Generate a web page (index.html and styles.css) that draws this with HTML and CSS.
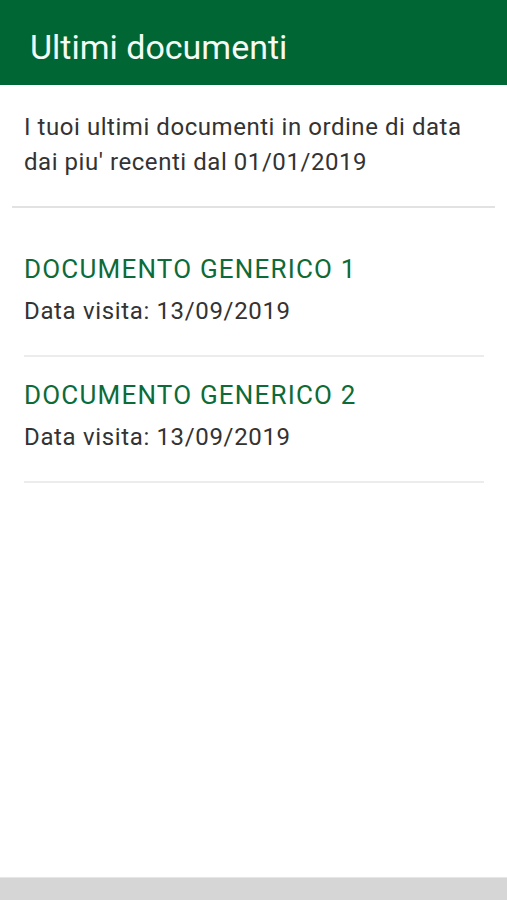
FILE: index.html
```html
<!DOCTYPE html>
<html lang="it">
<head>
<meta charset="utf-8">
<title>Ultimi documenti</title>
<link rel="stylesheet" href="styles.css">
</head>
<body>
<div class="app">
  <header class="topbar">
    <h1 class="topbar-title">Ultimi documenti</h1>
  </header>
  <main class="content">
    <p class="intro">I tuoi ultimi documenti in ordine di data dai piu' recenti dal 01/01/2019</p>
    <ul class="doc-list">
      <li class="doc-item">
        <div class="doc-title">DOCUMENTO GENERICO 1</div>
        <div class="doc-date">Data visita: 13/09/2019</div>
      </li>
      <li class="doc-item">
        <div class="doc-title">DOCUMENTO GENERICO 2</div>
        <div class="doc-date">Data visita: 13/09/2019</div>
      </li>
    </ul>
  </main>
  <footer class="navbar"></footer>
</div>
</body>
</html>
```
FILE: styles.css
```css
* { box-sizing: border-box; }
html, body { margin: 0; padding: 0; }
body {
  font-family: Roboto, "Noto Sans", "Liberation Sans", sans-serif;
  background: #ffffff;
  color: #333333;
}
.app {
  height: 900px;
  display: flex;
  flex-direction: column;
}
.topbar {
  height: 85px;
  background: #006633;
  display: flex;
  align-items: center;
  padding: 8px 0 0 30px;
  flex-shrink: 0;
}
.topbar-title {
  margin: 0;
  font-size: 34px;
  font-weight: 400;
  color: #f4fbf6;
}
.content {
  flex: 1;
}
.intro {
  margin: 0 12px;
  padding: 25px 12px 26px;
  font-size: 24px;
  line-height: 35px;
  letter-spacing: 0.55px;
  color: #333333;
  border-bottom: 2px solid #e2e2e2;
}
.doc-list {
  list-style: none;
  margin: 0;
  padding: 23px 23px 0 24px;
}
.doc-item {
  padding: 22px 0 28px;
  border-bottom: 2px solid #ececec;
}
.doc-title {
  font-size: 26px;
  line-height: 32px;
  letter-spacing: 1.2px;
  color: #0c6b38;
}
.doc-date {
  margin-top: 10px;
  font-size: 24px;
  line-height: 32px;
  letter-spacing: 0.65px;
  color: #333333;
}
.navbar {
  height: 23px;
  flex-shrink: 0;
  background: #d6d6d6;
  border-top: 1px solid #e6e6e6;
}
```
